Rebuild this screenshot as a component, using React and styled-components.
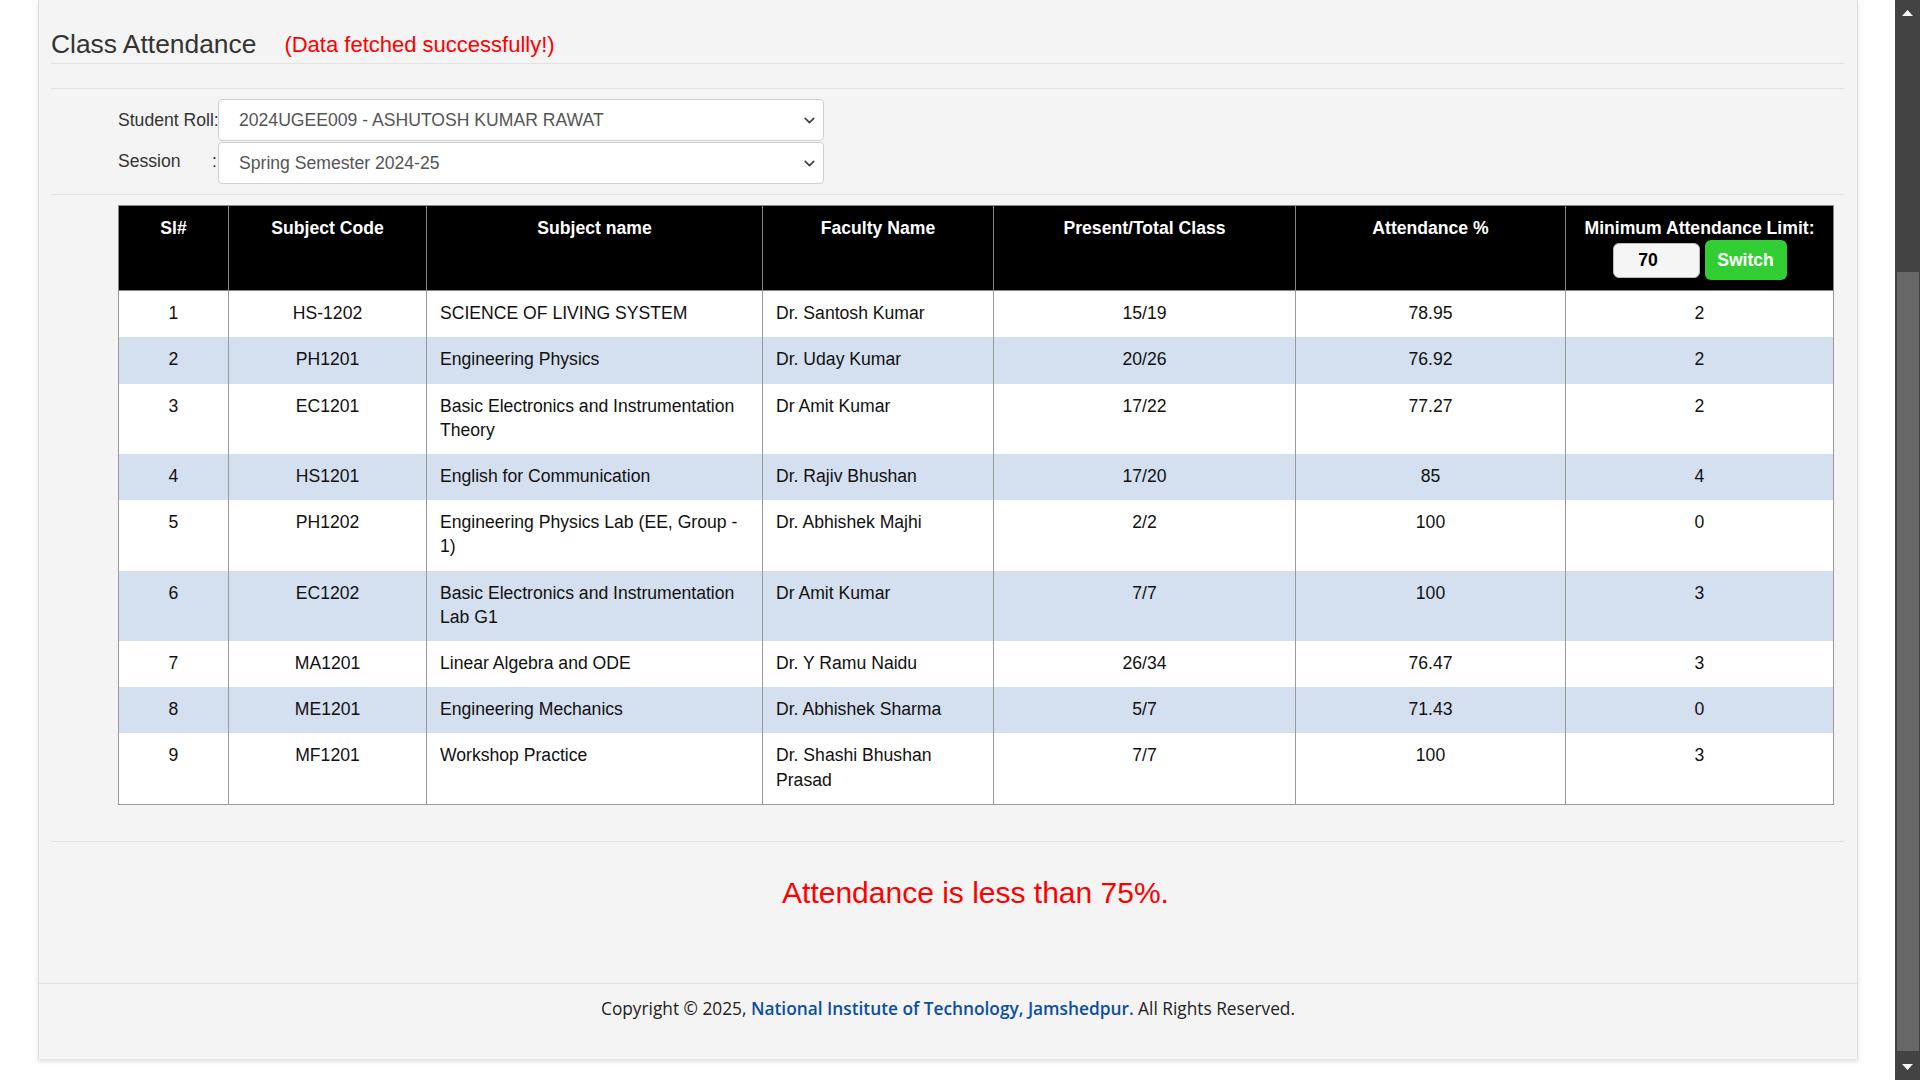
import React from "react";
import styled, { createGlobalStyle } from "styled-components";
import { ChevronDown } from "lucide-react";

const GlobalStyle = createGlobalStyle`
  html, body {
    margin: 0;
    padding: 0;
    height: 100%;
    background: #fff;
    overflow: hidden;
  }
  body {
    font-family: "Liberation Sans", Arial, sans-serif;
    font-size: 17.6px;
    color: #333;
  }
  * {
    box-sizing: border-box;
  }
`;

const subjects = [
  { sl: 1, code: "HS-1202", name: "SCIENCE OF LIVING SYSTEM", faculty: "Dr. Santosh Kumar", present: "15/19", pct: "78.95", limit: 2 },
  { sl: 2, code: "PH1201", name: "Engineering Physics", faculty: "Dr. Uday Kumar", present: "20/26", pct: "76.92", limit: 2 },
  { sl: 3, code: "EC1201", name: "Basic Electronics and Instrumentation Theory", faculty: "Dr Amit Kumar", present: "17/22", pct: "77.27", limit: 2 },
  { sl: 4, code: "HS1201", name: "English for Communication", faculty: "Dr. Rajiv Bhushan", present: "17/20", pct: "85", limit: 4 },
  { sl: 5, code: "PH1202", name: "Engineering Physics Lab (EE, Group - 1)", faculty: "Dr. Abhishek Majhi", present: "2/2", pct: "100", limit: 0 },
  { sl: 6, code: "EC1202", name: "Basic Electronics and Instrumentation Lab G1", faculty: "Dr Amit Kumar", present: "7/7", pct: "100", limit: 3 },
  { sl: 7, code: "MA1201", name: "Linear Algebra and ODE", faculty: "Dr. Y Ramu Naidu", present: "26/34", pct: "76.47", limit: 3 },
  { sl: 8, code: "ME1201", name: "Engineering Mechanics", faculty: "Dr. Abhishek Sharma", present: "5/7", pct: "71.43", limit: 0 },
  { sl: 9, code: "MF1201", name: "Workshop Practice", faculty: "Dr. Shashi Bhushan Prasad", present: "7/7", pct: "100", limit: 3 },
];

const columns = [110, 198, 336, 231, 302, 270, 268];

const App = () => {
  return (
    <>
      <GlobalStyle />
      <Screen>
        <Page>
          <Panel>
            <Content>
              <TitleRow>
                <Title>Class Attendance</Title>
                <Status>(Data fetched successfully!)</Status>
              </TitleRow>
              <Gap />
              <Form>
                <Label>Student Roll:</Label>
                <SelectBox>
                  <span>2024UGEE009 - ASHUTOSH KUMAR RAWAT</span>
                  <ChevronDown size={17} strokeWidth={2.4} />
                </SelectBox>
                <Label $split>
                  <span>Session</span>
                  <span>:</span>
                </Label>
                <SelectBox>
                  <span>Spring Semester 2024-25</span>
                  <ChevronDown size={17} strokeWidth={2.4} />
                </SelectBox>
              </Form>
              <TableSection>
                <Table>
                  <colgroup>
                    {columns.map((w, i) => (
                      <col key={i} style={{ width: w }} />
                    ))}
                  </colgroup>
                  <thead>
                    <tr>
                      <Th>Sl#</Th>
                      <Th>Subject Code</Th>
                      <Th>Subject name</Th>
                      <Th>Faculty Name</Th>
                      <Th>Present/Total Class</Th>
                      <Th>Attendance %</Th>
                      <Th>
                        Minimum Attendance Limit:
                        <LimitRow>
                          <LimitInput defaultValue="70" />
                          <SwitchButton>Switch</SwitchButton>
                        </LimitRow>
                      </Th>
                    </tr>
                  </thead>
                  <tbody>
                    {subjects.map((s) => (
                      <Row key={s.sl}>
                        <Td $center>{s.sl}</Td>
                        <Td $center>{s.code}</Td>
                        <Td>{s.name}</Td>
                        <Td>{s.faculty}</Td>
                        <Td $center>{s.present}</Td>
                        <Td $center>{s.pct}</Td>
                        <Td $center>{s.limit}</Td>
                      </Row>
                    ))}
                  </tbody>
                </Table>
              </TableSection>
              <Message>Attendance is less than 75%.</Message>
            </Content>
            <Footer>
              Copyright © 2025, <FooterLink>National Institute of Technology, Jamshedpur.</FooterLink> All Rights Reserved.
            </Footer>
          </Panel>
        </Page>
        <ScrollBar>
          <ScrollArrow>
            <svg width="11" height="6" viewBox="0 0 11 6">
              <polygon points="5.5,0 11,6 0,6" fill="#fff" />
            </svg>
          </ScrollArrow>
          <ScrollTrack>
            <ScrollThumb />
          </ScrollTrack>
          <ScrollArrow>
            <svg width="11" height="6" viewBox="0 0 11 6">
              <polygon points="0,0 11,0 5.5,6" fill="#fff" />
            </svg>
          </ScrollArrow>
        </ScrollBar>
      </Screen>
    </>
  );
};

const Screen = styled.div`
  display: flex;
  height: 1080px;
  overflow: hidden;
`;

const Page = styled.div`
  flex: 1;
  padding-left: 38px;
  background: #fff;
`;

const Panel = styled.div`
  width: 1820px;
  background: #f4f4f4;
  border-left: 1px solid #dedede;
  border-right: 1px solid #dedede;
  box-shadow: 0 3px 4px rgba(0, 0, 0, 0.12);
`;

const Content = styled.div`
  padding: 0 13px 0 12px;
`;

const TitleRow = styled.div`
  display: flex;
  align-items: center;
  gap: 28px;
  padding-top: 28px;
  padding-bottom: 3px;
  border-bottom: 1px solid #e3e3e3;
`;

const Title = styled.h2`
  margin: 0;
  font-weight: normal;
  font-size: 26.4px;
  line-height: 30px;
  color: #333;
`;

const Status = styled.span`
  font-size: 22px;
  line-height: 30px;
  color: #ff0000;
  padding-top: 2px;
`;

const Gap = styled.div`
  height: 25px;
  border-bottom: 1px solid #e3e3e3;
`;

const Form = styled.div`
  display: grid;
  grid-template-columns: 100px 606px;
  row-gap: 1px;
  align-items: center;
  padding: 10px 0 10px 67px;
  border-bottom: 1px solid #e3e3e3;
`;

const Label = styled.label`
  display: flex;
  justify-content: ${(p) => (p.$split ? "space-between" : "flex-start")};
  padding-right: ${(p) => (p.$split ? "1px" : "0")};
  margin-top: ${(p) => (p.$split ? "-3px" : "0")};
  font-size: 17.6px;
  color: #333;
  white-space: nowrap;
`;

const SelectBox = styled.div`
  display: flex;
  align-items: center;
  justify-content: space-between;
  height: 42px;
  padding: 0 5px 0 20px;
  background: #fff;
  border: 1px solid #cfcfcf;
  border-radius: 4px;
  font-size: 17.6px;
  color: #555;

  & svg {
    color: #444;
  }
`;

const TableSection = styled.div`
  padding: 10px 11px 36px 67px;
  border-bottom: 1px solid #e3e3e3;
`;

const Table = styled.table`
  width: 1715px;
  table-layout: fixed;
  border-collapse: collapse;
  border: 1px solid #999;
  font-size: 17.6px;
  line-height: 24.2px;
`;

const Th = styled.th`
  background: #000;
  color: #fff;
  font-weight: bold;
  text-align: center;
  vertical-align: top;
  padding: 10px 8px 10px;
  border: 1px solid #888;
`;

const LimitRow = styled.div`
  display: flex;
  justify-content: center;
  align-items: center;
  gap: 5px;
`;

const LimitInput = styled.input`
  width: 87px;
  height: 35px;
  background: #f5f5f5;
  border: 1px solid #bbb;
  border-radius: 6px;
  font-family: "Liberation Sans", Arial, sans-serif;
  font-size: 17.6px;
  font-weight: bold;
  color: #000;
  text-align: center;
  padding: 0 16px 0 0;
`;

const SwitchButton = styled.button`
  width: 82px;
  height: 40px;
  background: #32cd32;
  border: none;
  border-radius: 6px;
  color: #fff;
  font-family: "Liberation Sans", Arial, sans-serif;
  font-size: 17.6px;
  font-weight: bold;
`;

const Row = styled.tr`
  background: #fff;

  &:nth-child(even) {
    background: #d4dff0;
  }
`;

const Td = styled.td`
  vertical-align: top;
  padding: 10px 13px 12px;
  text-align: ${(p) => (p.$center ? "center" : "left")};
  border-left: 1px solid #999;
  border-right: 1px solid #999;
  color: #111;
`;

const Message = styled.div`
  margin: 0 11px 0 67px;
  padding: 33px 0 72px;
  font-size: 30px;
  line-height: 36px;
  color: #ff0000;
  text-align: center;
`;

const Footer = styled.div`
  padding: 12px 0 37px;
  border-top: 1px solid #e0e0e0;
  font-family: "Open Sans", sans-serif;
  font-size: 17.3px;
  line-height: 26px;
  color: #222;
  text-align: center;
`;

const FooterLink = styled.a`
  color: #0b4ea2;
  font-weight: 600;
  text-decoration: none;
`;

const ScrollBar = styled.div`
  display: flex;
  flex-direction: column;
  width: 25px;
  background: #434343;
`;

const ScrollArrow = styled.div`
  display: flex;
  align-items: center;
  justify-content: center;
  height: 26px;
`;

const ScrollTrack = styled.div`
  flex: 1;
  padding: 246px 1px 3px 2px;
  display: flex;
`;

const ScrollThumb = styled.div`
  flex: 1;
  background: #686868;
`;

export default App;
